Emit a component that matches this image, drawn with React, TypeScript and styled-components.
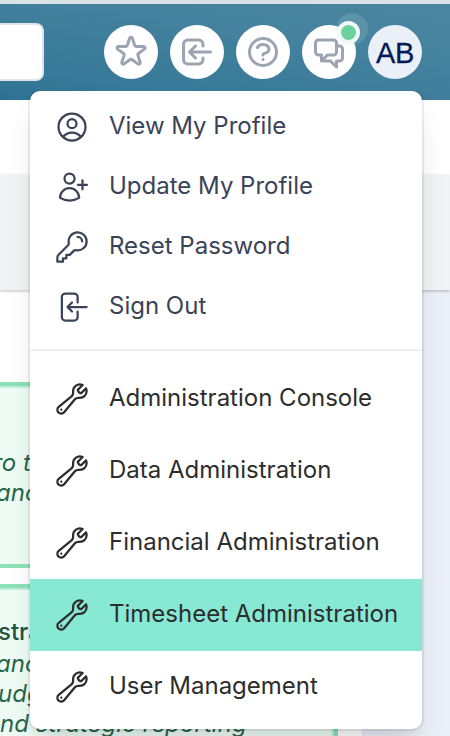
import React from "react";
import styled, { createGlobalStyle, css } from "styled-components";

const Global = createGlobalStyle`
  *, *::before, *::after { box-sizing: border-box; }
  html, body { margin: 0; padding: 0; overflow: hidden; }
  body { font-family: Inter, "Liberation Sans", sans-serif; background: #fff; }
  p, h2 { margin: 0; }
`;

const Page = styled.div`
  position: relative;
  width: 450px;
  height: 736px;
  overflow: hidden;
  display: flex;
  flex-direction: column;
  background: #fff;
`;

const Header = styled.header`
  flex: none;
  height: 100px;
  border-top: 4px solid #dae1e7;
  background: linear-gradient(190deg, #4b859f 0%, #44829e 35%, #377999 80%, #2f7192 100%);
  display: flex;
  align-items: flex-start;
  padding-top: 19px;
`;

const SearchBox = styled.div`
  width: 44px;
  height: 58px;
  background: #fff;
  border: 2px solid #e0e3e9;
  border-left: 0;
  border-radius: 0 8px 8px 0;
`;

const Actions = styled.nav`
  display: flex;
  gap: 12px;
  margin: 2px 0 0 60px;
`;

const RoundButton = styled.button<{ $avatar?: boolean }>`
  position: relative;
  width: 54px;
  height: 54px;
  padding: ${(p) => (p.$avatar ? "2px 0 0" : "0")};
  border: 0;
  border-radius: 50%;
  display: flex;
  align-items: center;
  justify-content: center;
  background: ${(p) => (p.$avatar ? "#ebeff8" : "#fff")};
  color: ${(p) => (p.$avatar ? "#031b57" : "#9ca3b1")};
  font: 400 29px/1 "Liberation Sans", sans-serif;
  letter-spacing: -0.4px;
  -webkit-text-stroke: 0.3px currentColor;
  svg { width: 36px; height: 36px; display: block; }
`;

const Status = styled.span`
  position: absolute;
  left: 34px;
  top: -12px;
  width: 32px;
  height: 32px;
  border-radius: 50%;
  background: rgba(180, 215, 215, 0.2);
  &::before {
    content: "";
    position: absolute;
    left: 1px;
    top: 8px;
    width: 23px;
    height: 23px;
    border-radius: 50%;
    border: 4px solid #f0faf7;
    background: #69d29d;
  }
`;

const TitleBand = styled.div`
  flex: none;
  height: 75px;
  background: #fff;
`;

const TabBand = styled.div`
  flex: none;
  position: relative;
  height: 115px;
  background: #f1f2f4;
  box-shadow: 0 1px 3px rgba(0, 0, 0, 0.25);
`;

const Body = styled.div`
  flex: 1;
  min-height: 0;
  display: flex;
`;

const Main = styled.main`
  width: 362px;
  flex: none;
  padding-top: 92px;
  display: flex;
  flex-direction: column;
  gap: 16px;
`;

const Rail = styled.aside`
  flex: 1;
  background: #eaeff8;
`;

const Card = styled.section<{ $height: number; $top: number }>`
  flex: none;
  width: 338px;
  height: ${(p) => p.$height}px;
  padding-top: ${(p) => p.$top}px;
  border: 4px solid #8ce2b8;
  border-left: 0;
  background: #effcf6;
  box-shadow: inset 0 2px #bdf0d7, inset -2px 0 #bdf0d7;
  overflow: hidden;
  color: #276749;
`;

const CardTitle = styled.h2`
  font-size: 24px;
  line-height: 34px;
  font-weight: 500;
  color: #22543d;
  margin-left: -2px;
`;

const CardLine = styled.p<{ $shift: number }>`
  font-size: 24px;
  line-height: 30px;
  font-style: italic;
  letter-spacing: 0.05px;
  white-space: nowrap;
  margin-left: ${(p) => p.$shift}px;
`;

const Menu = styled.div`
  position: absolute;
  left: 30px;
  top: 91px;
  width: 392px;
  height: 638px;
  padding: 5px 0 6px;
  border-radius: 10px;
  background: #fff;
  box-shadow: 0 0 0 2px rgba(0, 0, 0, 0.06), 0 20px 30px -6px rgba(0, 0, 0, 0.12), 0 8px 12px -4px rgba(0, 0, 0, 0.06);
  clip-path: inset(0 -40px -40px -40px);
`;

const Group = styled.div<{ $divided?: boolean }>`
  ${(p) =>
    p.$divided &&
    css`
      border-top: 2px solid #edeff1;
      margin-top: 13px;
      padding-top: 12px;
    `}
`;

const Item = styled.a<{ $tall?: boolean; $active?: boolean }>`
  display: flex;
  align-items: center;
  height: ${(p) => (p.$tall ? 72 : 60)}px;
  padding-left: 24px;
  gap: 19px;
  background: ${(p) => (p.$active ? "#87e8d4" : "transparent")};
  color: ${(p) => (p.$tall ? "#2d2d2d" : "#3b4357")};
  svg {
    flex: none;
    width: 36px;
    height: 36px;
    margin-top: ${(p) => (p.$tall ? 0 : 2)}px;
    display: block;
  }
  span { margin-top: ${(p) => (p.$tall ? -2 : 0)}px; }
`;

const Label = styled.span`
  font-size: 24px;
  line-height: 36px;
  white-space: nowrap;
`;

const Icon = ({ d, w = 1.5 }: { d: string; w?: number }) => (
  <svg viewBox="0 0 24 24" fill="none" stroke="currentColor" strokeWidth={w} strokeLinecap="round" strokeLinejoin="round">
    <path d={d} />
  </svg>
);

const icons = {
  star: "M11.049 2.927c.3-.921 1.603-.921 1.902 0l1.519 4.674a1 1 0 00.95.69h4.915c.969 0 1.371 1.24.588 1.81l-3.976 2.888a1 1 0 00-.363 1.118l1.518 4.674c.3.922-.755 1.688-1.538 1.118l-3.976-2.888a1 1 0 00-1.176 0l-3.976 2.888c-.783.57-1.838-.197-1.538-1.118l1.518-4.674a1 1 0 00-.363-1.118l-3.976-2.888c-.784-.57-.38-1.81.588-1.81h4.914a1 1 0 00.951-.69l1.519-4.674z",
  enter: "M11 16l-4-4m0 0l4-4m-4 4h14m-5 4v1a3 3 0 01-3 3H6a3 3 0 01-3-3V7a3 3 0 013-3h7a3 3 0 013 3v1",
  help: "M8.228 9c.549-1.165 2.03-2 3.772-2 2.21 0 4 1.343 4 3 0 1.4-1.278 2.575-3.006 2.907-.542.104-.994.54-.994 1.093m0 3h.01M21 12a9 9 0 11-18 0 9 9 0 0118 0z",
  chat: "M17 8h2a2 2 0 012 2v6a2 2 0 01-2 2h-2v4l-4-4H9a1.994 1.994 0 01-1.414-.586m0 0L11 14h4a2 2 0 002-2V6a2 2 0 00-2-2H5a2 2 0 00-2 2v6a2 2 0 002 2h2v4l.586-.586z",
  profile: "M17.982 18.725A7.488 7.488 0 0012 15.75a7.488 7.488 0 00-5.982 2.975m11.963 0a9 9 0 10-11.963 0m11.963 0A8.966 8.966 0 0112 21a8.966 8.966 0 01-5.982-2.275M15 9.75a3 3 0 11-6 0 3 3 0 016 0z",
  addUser: "M19 7.5v3m0 0v3m0-3h3m-3 0h-3m-2.250-4.125a3.375 3.375 0 11-6.750 0 3.375 3.375 0 016.750 0zM4 19.235v-.110a6.375 6.375 0 0112.750 0v.109A12.318 12.318 0 0110.374 21c-2.331 0-4.512-.645-6.374-1.766z",
  key: "M15.75 5.25a3 3 0 013 3m3 0a6 6 0 01-7.029 5.912c-.563-.097-1.159.026-1.563.43L10.5 17.25H8.25v2.25H6v2.25H2.25v-2.818c0-.597.237-1.17.659-1.591l6.499-6.499c.404-.404.527-1 .43-1.563A6 6 0 1121.75 8.25z",
  signOut: "M15.75 9V5.25A2.25 2.25 0 0013.5 3h-6a2.25 2.25 0 00-2.25 2.25v13.5A2.25 2.25 0 007.5 21h6a2.25 2.25 0 002.25-2.25V15M12 9l-3 3m0 0l3 3m-3-3h12.75",
  wrench: "M21.75 6.75a4.5 4.5 0 01-4.884 4.484c-1.076-.091-2.264.071-2.95.904l-7.152 8.684a2.548 2.548 0 11-3.586-3.586l8.684-7.152c.833-.686.995-1.874.904-2.95a4.5 4.5 0 016.336-4.486l-3.276 3.276a3.004 3.004 0 002.25 2.25l3.276-3.276c.256.565.398 1.192.398 1.852zM4.867 19.125h.008v.008h-.008v-.008z",
};

const profileItems = [
  { label: "View My Profile", icon: icons.profile },
  { label: "Update My Profile", icon: icons.addUser },
  { label: "Reset Password", icon: icons.key },
  { label: "Sign Out", icon: icons.signOut },
];

const adminItems = [
  "Administration Console",
  "Data Administration",
  "Financial Administration",
  "Timesheet Administration",
  "User Management",
];

export default function App() {
  return (
    <>
      <Global />
      <Page>
        <Header>
          <SearchBox />
          <Actions>
            <RoundButton><Icon d={icons.star} w={2} /></RoundButton>
            <RoundButton><Icon d={icons.enter} w={2} /></RoundButton>
            <RoundButton><Icon d={icons.help} w={2} /></RoundButton>
            <RoundButton><Icon d={icons.chat} w={2} /><Status /></RoundButton>
            <RoundButton $avatar>AB</RoundButton>
          </Actions>
        </Header>
        <TitleBand />
        <TabBand />
        <Body>
          <Main>
            <Card $height={186} $top={62}>
              <CardLine $shift={-7}>ro t</CardLine>
              <CardLine $shift={-4}>anc</CardLine>
            </Card>
            <Card $height={300} $top={27}>
              <CardTitle>stra</CardTitle>
              <CardLine $shift={-4}>anc</CardLine>
              <CardLine $shift={-2}>udg</CardLine>
              <CardLine $shift={0}>nd strategic reporting</CardLine>
            </Card>
          </Main>
          <Rail />
        </Body>
        <Menu>
          <Group>
            {profileItems.map((item) => (
              <Item key={item.label}>
                <Icon d={item.icon} />
                <Label>{item.label}</Label>
              </Item>
            ))}
          </Group>
          <Group $divided>
            {adminItems.map((label) => (
              <Item key={label} $tall $active={label === "Timesheet Administration"}>
                <Icon d={icons.wrench} />
                <Label>{label}</Label>
              </Item>
            ))}
          </Group>
        </Menu>
      </Page>
    </>
  );
}
